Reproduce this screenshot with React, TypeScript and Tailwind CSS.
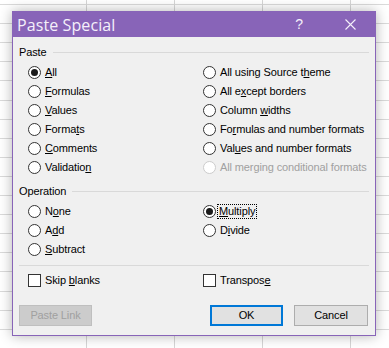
import { FC, ReactNode } from 'react';

// Paste Special dialog on top of a spreadsheet grid

const Radio: FC<{ checked?: boolean; disabled?: boolean }> = ({ checked, disabled }) => (
  <span
    className={`flex h-[13px] w-[13px] shrink-0 items-center justify-center rounded-full border bg-white ${
      disabled ? 'border-[#cccccc]' : 'border-[#333333]'
    }`}
  >
    {checked && <span className="h-[7px] w-[7px] rounded-full bg-[#1a1a1a]" />}
  </span>
);

const Check: FC = () => <span className="h-[13px] w-[13px] shrink-0 border border-[#333333] bg-white" />;

const Option: FC<{ children: ReactNode; checked?: boolean; disabled?: boolean; focus?: boolean }> = ({
  children,
  checked,
  disabled,
  focus,
}) => (
  <div className="flex h-[19px] items-center gap-[4px] whitespace-nowrap">
    <Radio checked={checked} disabled={disabled} />
    {focus ? (
      <span className="-ml-[3px] border border-dotted border-black px-[1px] leading-[13px]">{children}</span>
    ) : (
      <span className={disabled ? 'text-[#a0a0a0]' : ''}>{children}</span>
    )}
  </div>
);

const Section: FC<{ title: string }> = ({ title }) => (
  <div className="flex h-[16px] items-center gap-[6px]">
    <span>{title}</span>
    <span className="h-px flex-1 bg-[#d9d9d9]" />
  </div>
);

export default function App() {
  return (
    <div
      className="h-[348px] w-[389px] overflow-hidden bg-white bg-[image:repeating-linear-gradient(90deg,transparent_0_86px,#d6d6d6_86px_87px,transparent_87px_88px),repeating-linear-gradient(180deg,transparent_0_4px,#dadada_4px_5px,transparent_5px_19.1px)] pt-[11px] pl-[12px]"
      style={{ fontFamily: '"Liberation Sans", Arial, sans-serif' }}
    >
      <div className="flex h-[325px] w-[364px] flex-col border border-[#8864b8] bg-[#f0f0f0] text-[11px] tracking-[-0.12px] text-black shadow-[0_0_12px_rgba(0,0,0,0.3)]">
        {/* title bar */}
        <div className="flex h-[25px] items-center bg-[#8864b8] pl-[4px] text-[#f4f0fa]">
          <span className="text-[16px] tracking-[0.1px]" style={{ fontFamily: '"Open Sans", sans-serif' }}>
            Paste Special
          </span>
          <span className="ml-auto mr-[42px] text-[14px]">?</span>
          <svg width="11" height="11" viewBox="0 0 11 11" className="mr-[19px]">
            <path d="M0.5 0.5 L10.5 10.5 M10.5 0.5 L0.5 10.5" stroke="#f4f0fa" strokeWidth="1.1" />
          </svg>
        </div>

        {/* body */}
        <div className="flex flex-1 flex-col px-[6px] pt-[7px]">
          <Section title="Paste" />
          <div className="mt-[3px] grid grid-cols-[175px_1fr] pl-[9px]">
            <div className="flex flex-col">
              <Option checked>
                <u>A</u>ll
              </Option>
              <Option>
                <u>F</u>ormulas
              </Option>
              <Option>
                <u>V</u>alues
              </Option>
              <Option>
                Forma<u>t</u>s
              </Option>
              <Option>
                <u>C</u>omments
              </Option>
              <Option>
                Validatio<u>n</u>
              </Option>
            </div>
            <div className="flex flex-col">
              <Option>
                All using Source t<u>h</u>eme
              </Option>
              <Option>
                All e<u>x</u>cept borders
              </Option>
              <Option>
                Column <u>w</u>idths
              </Option>
              <Option>
                Fo<u>r</u>mulas and number formats
              </Option>
              <Option>
                Val<u>u</u>es and number formats
              </Option>
              <Option disabled>All merging conditional formats</Option>
            </div>
          </div>

          <div className="mt-[6px]">
            <Section title="Operation" />
          </div>
          <div className="mt-[3px] grid grid-cols-[175px_1fr] pl-[9px]">
            <div className="flex flex-col">
              <Option>
                N<u>o</u>ne
              </Option>
              <Option>
                A<u>d</u>d
              </Option>
              <Option>
                <u>S</u>ubtract
              </Option>
            </div>
            <div className="flex flex-col">
              <Option checked focus>
                <u>M</u>ultiply
              </Option>
              <Option>
                D<u>i</u>vide
              </Option>
            </div>
          </div>

          <div className="mt-[6px] h-px bg-[#d9d9d9]" />

          <div className="mt-[5px] grid grid-cols-[175px_1fr] pl-[9px]">
            <div className="flex h-[19px] items-center gap-[4px]">
              <Check />
              <span>
                Skip <u>b</u>lanks
              </span>
            </div>
            <div className="flex h-[19px] items-center gap-[4px]">
              <Check />
              <span>
                Transpos<u>e</u>
              </span>
            </div>
          </div>

          <div className="mt-[15px] flex items-center pr-[1px]">
            <button className="h-[21px] w-[73px] border border-[#bfbfbf] bg-[#cccccc] text-[#a0a0a0]">Paste Link</button>
            <button className="ml-auto h-[21px] w-[73px] border-2 border-[#0078d7] bg-[#e1e1e1]">OK</button>
            <button className="ml-[11px] h-[21px] w-[74px] border border-[#adadad] bg-[#e1e1e1]">Cancel</button>
          </div>
        </div>
      </div>
    </div>
  );
}
